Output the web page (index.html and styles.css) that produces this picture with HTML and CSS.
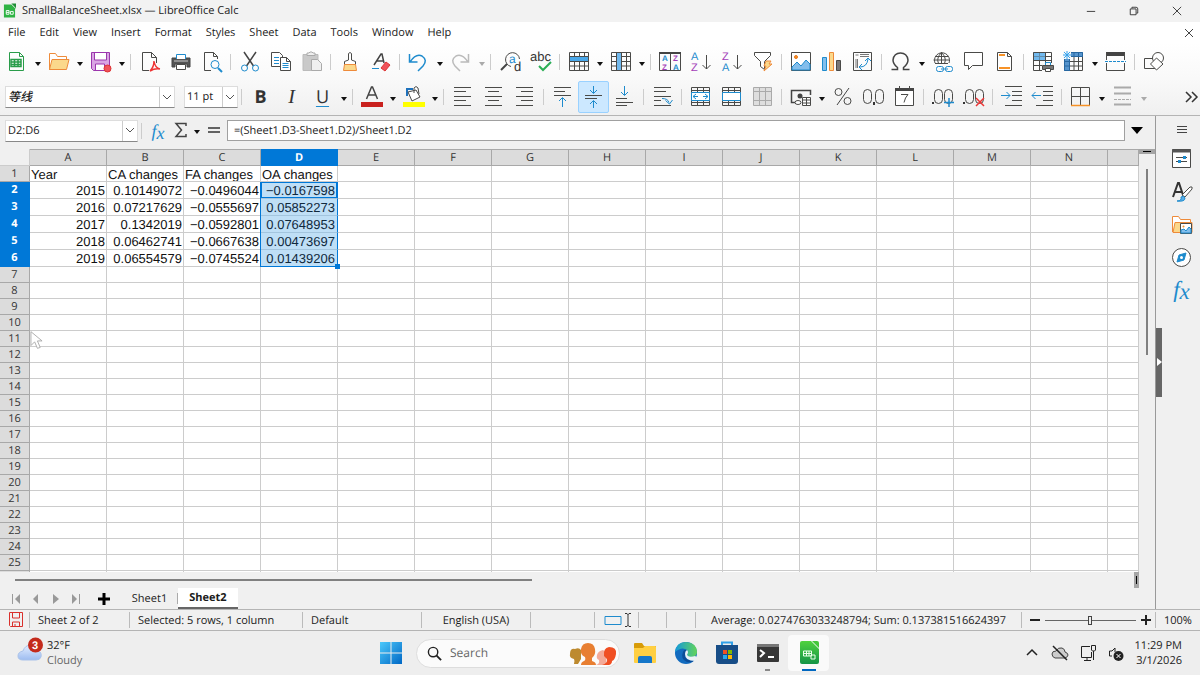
FILE: index.html
```html
<!DOCTYPE html>
<html lang="en">
<head>
<meta charset="utf-8">
<title>SmallBalanceSheet.xlsx — LibreOffice Calc</title>
<link rel="stylesheet" href="styles.css">
</head>
<body>
<header class="titlebar">
  <svg class="app-icon" viewBox="0 0 14 16"><path d="M1 1h8l4 4v10H1z" fill="#2fb344"/><path d="M9 0l5 5V0z" fill="#1e8e35"/><path d="M3.500 7.500h3v4h-3zM8 8.500h3v3H8zM3.500 9.500h3" fill="none" stroke="#fff"/></svg>
  <h1>SmallBalanceSheet.xlsx — LibreOffice Calc</h1>
  <div class="window-buttons">
    <button aria-label="Minimize"><svg viewBox="0 0 12 12"><path d="M1 6.500h10"/></svg></button>
    <button aria-label="Restore"><svg viewBox="0 0 12 12"><path d="M1.500 3.500h7v7h-7zM3.500 3V1.500h5q2 0 2 2v5H9"/></svg></button>
    <button aria-label="Close"><svg viewBox="0 0 12 12"><path d="M1 1l10 10M11 1L1 11"/></svg></button>
  </div>
</header>
<nav class="menubar">
  <button>File</button><button>Edit</button><button>View</button><button>Insert</button><button>Format</button><button>Styles</button><button>Sheet</button><button>Data</button><button>Tools</button><button>Window</button><button>Help</button>
  <button class="doc-close" aria-label="Close document"><svg viewBox="0 0 8 8"><path d="M0 0l8 8M8 0L0 8"/></svg></button>
</nav>

<div class="toolbar">
  <button class="tool" aria-label="New"><svg viewBox="0 0 22 22"><path class="gr" d="M3.500 1.500h10l4 4v14h-14zM13.500 1.500v4h4"/><path class="gr" d="M5 8.500h10v7H5zM5 11h10M5 13.500h10M8.500 8.500v7M12 8.500v7" stroke-width="1.500"/></svg></button><button class="drop" aria-label="New options"></button>
  <button class="tool" aria-label="Open"><svg viewBox="0 0 22 22"><path class="or" fill="#fff" d="M1.500 19V2.500h6l2 3h9V9"/><path class="or" d="M1.500 18.500L4 8.500h17l-2.500 10z" fill="#fbd88b"/></svg></button><button class="drop" aria-label="Recent files"></button>
  <button class="tool" aria-label="Save"><svg viewBox="0 0 22 22"><path class="pu" d="M1.500 1.500h18v18h-16l-2-2z" fill="#d9a5e3"/><path class="pu" d="M4.500 2v7h12V2" fill="#fff"/><path class="pu" d="M5.500 19v-6h9v6" fill="#fff"/><circle cx="17.500" cy="17.500" r="3.500" fill="#f0525a" stroke="#d33"/></svg></button><button class="drop" aria-label="Save options"></button>
  <span class="sep"></span>
  <button class="tool" aria-label="Export as PDF"><svg viewBox="0 0 22 22"><path class="dk" d="M10 19.500H3.500v-18h9l5 5V12M12.500 1.500v5h5"/><path d="M11 20q4-4 4-10 1 7 6 8-5-1-10 2z" stroke="#e33" stroke-width="1.500"/></svg></button>
  <button class="tool" aria-label="Print"><svg viewBox="0 0 22 22"><path d="M2 7h18v9h-3v-3H5v3H2z" fill="#555" stroke="#444"/><path class="bl" d="M6.500 8V3.500h9V8" fill="#fff"/><path class="dk" d="M6.500 13.500h9v5h-9z" fill="#fff"/><path d="M4 10h14" stroke="#ccc"/></svg></button>
  <button class="tool" aria-label="Print preview"><svg viewBox="0 0 22 22"><path class="dk" d="M10 19.500H3.500v-18h9l4 4V8M12.500 1.500v4h4"/><circle class="bl" cx="14" cy="13.500" r="4"/><path class="bl" d="M17 17l4 4" stroke-width="2"/></svg></button>
  <span class="sep"></span>
  <button class="tool" aria-label="Cut"><svg viewBox="0 0 22 22"><path d="M5 1l9.500 14M17 1L7.500 15" stroke="#444" stroke-width="1.500"/><circle class="bl" cx="5.500" cy="17" r="3"/><circle class="bl" cx="16.500" cy="17" r="3"/></svg></button>
  <button class="tool" aria-label="Copy"><svg viewBox="0 0 22 22"><path class="dk" d="M1.500 1.500h8l3 3v11h-11z" fill="#fff"/><path class="bl" d="M4 6.500h5M4 9.500h5M4 12.500h5"/><path class="dk" d="M10.500 6.500h6l4 4v9h-10zM16.500 6.500v4h4" fill="#fff"/><path class="bl" d="M12.500 12.500h6M12.500 14.500h6M12.500 16.500h6"/></svg></button>
  <button class="tool" aria-label="Paste"><svg viewBox="0 0 22 22"><path d="M2 3.500h15v16H2z" fill="#c9c9c9" stroke="#bbb"/><path d="M6 4.500V2h2l1-1h2l1 1h2v2.500z" fill="#eee" stroke="#aaa"/><path d="M10.500 8.500h6l4 4v7h-10z" fill="#f0f0f0" stroke="#aaa"/></svg></button>
  <span class="sep"></span>
  <button class="tool" aria-label="Clone formatting"><svg viewBox="0 0 22 22"><path class="dk" d="M9.500 9V2.500q1.500-2 3 0V9l4 1.500v3h-11v-3z" fill="#fff"/><path class="or" d="M5.500 13.500h11l1 6h-13z" fill="#fbd88b"/></svg></button>
  <button class="tool" aria-label="Clear formatting"><svg viewBox="0 0 22 22"><path d="M4 14L11 3h1l2 9M7 10h6" stroke="#444" stroke-width="1.500"/><path d="M11 17l5-6 4 3-5 6z" fill="#f0525a" stroke="#d33"/><path class="bl" d="M2 17.500h7"/></svg></button>
  <span class="sep"></span>
  <button class="tool" aria-label="Undo"><svg viewBox="0 0 22 22"><path class="bl" d="M1.500 3v8h8M2 11q6-9 12-6 6 4 1 10l-5 5" stroke-width="1.500"/></svg></button><button class="drop" aria-label="Undo list"></button>
  <button class="tool" aria-label="Redo" disabled><svg viewBox="0 0 22 22"><path d="M18.500 3v8h-8M18 11Q12 2 6 5q-6 4-1 10l5 5" stroke="#bbb" stroke-width="1.500"/></svg></button><button class="drop" aria-label="Redo list" disabled></button>
  <span class="sep"></span>
  <button class="tool" aria-label="Find and replace"><svg viewBox="0 0 22 22"><path class="dk" d="M12 15.500A7 7 0 1 1 20.500 8"/><path d="M8 13l-6 6" stroke="#444" stroke-width="2"/><text x="10" y="12" fill="#1e8bcd" font-size="12">a</text><text x="15" y="20" fill="#333" font-size="13">d</text></svg></button>
  <button class="tool" aria-label="Spelling"><svg viewBox="0 0 22 22"><text x="0" y="10" fill="#333" font-size="13">abc</text><path d="M9 15l4 4 8-8" stroke="#2cae55" stroke-width="2"/></svg></button>
  <span class="sep"></span>
  <button class="tool" aria-label="Row"><svg viewBox="0 0 22 22"><path d="M1 6h19v5H1z" fill="#72b9ee"/><path class="dk" d="M1.500 1.500h19v18h-19zM1.500 5.500h19M1.500 10.500h19M1.500 15h19M6.500 1.500v18M11.500 1.500v18M16.500 1.500v18"/><path d="M2 6h18v4H2z" fill="#4aa8ea"/></svg></button><button class="drop" aria-label="Row options"></button>
  <button class="tool" aria-label="Column"><svg viewBox="0 0 22 22"><path class="dk" d="M1.500 1.500h19v18h-19zM1.500 5.500h19M1.500 10.500h19M1.500 15h19M6.500 1.500v18M11.500 1.500v18M16.500 1.500v18"/><path d="M7 2h4v17H7z" fill="#72b9ee"/></svg></button><button class="drop" aria-label="Column options"></button>
  <span class="sep"></span>
  <button class="tool" aria-label="Sort"><svg viewBox="0 0 22 22"><path class="dk" d="M.500 1.500h21v18H.5zM11.500 2v17"/><path d="M0 2h22" stroke="#444" stroke-width="2"/><g font-size="8" font-weight="700"><text x="3" y="10" fill="#1e8bcd">A</text><text x="3" y="19" fill="#a33db8">Z</text><text x="14" y="10" fill="#a33db8">Z</text><text x="14" y="19" fill="#1e8bcd">A</text></g></svg></button>
  <button class="tool" aria-label="Sort ascending"><svg viewBox="0 0 22 22"><g font-size="11"><text x="1" y="9" fill="#1e8bcd">A</text><text x="1" y="20" fill="#a33db8">Z</text></g><path class="dk" d="M16.500 4v14M12.500 14l4 4 4-4"/></svg></button>
  <button class="tool" aria-label="Sort descending"><svg viewBox="0 0 22 22"><g font-size="11"><text x="1" y="9" fill="#a33db8">Z</text><text x="1" y="20" fill="#1e8bcd">A</text></g><path class="dk" d="M16.500 4v14M12.500 14l4 4 4-4"/></svg></button>
  <button class="tool" aria-label="AutoFilter"><svg viewBox="0 0 22 22"><path class="dk" d="M2.500 1.500h16v3l-6 6v8l-4-3v-5l-6-6z" fill="#fff"/><path class="or" d="M14 10h5l-2 3h3l-8 7 2-5h-2z" fill="#fbd88b"/></svg></button>
  <span class="sep"></span>
  <button class="tool" aria-label="Insert image"><svg viewBox="0 0 22 22"><path class="dk" d="M1.500 1.500h19v18h-19z" fill="#fff"/><circle cx="6" cy="6" r="1.500" fill="#f79226" stroke="#e8791c"/><path class="bl" d="M2 19v-3l5-5 4 4 5-6 4 4v6z" fill="#83beec"/></svg></button>
  <button class="tool" aria-label="Insert chart"><svg viewBox="0 0 22 22"><path class="bl" d="M1.500 6.500h4v13h-4z" fill="#83beec"/><path class="or" d="M8.500 1.500h4v18h-4z" fill="#fbd88b"/><path class="dk" d="M15.500 9.500h4v10h-4z" fill="#777"/></svg></button>
  <button class="tool" aria-label="Insert pivot table"><svg viewBox="0 0 22 22"><path class="dk" d="M1.500 1.500h18v18h-18z"/><path d="M3.500 4h3M8 3.500h9M8 5.500h9M4 8v9M5.500 8v9" stroke="#777"/><path class="bl" d="M8 16q7 0 8-8M13 10l3-3 3 3M10 13l-3 3 3 3"/></svg></button>
  <span class="sep"></span>
  <button class="tool" aria-label="Insert special character"><svg viewBox="0 0 22 22"><path d="M1.500 18.500h6v-2Q3 13 3 9q1-7 7.500-7T18 9q0 4-4.500 7.500v2h6" stroke="#444" stroke-width="1.500"/></svg></button><button class="drop" aria-label="Special characters"></button>
  <button class="tool" aria-label="Insert hyperlink"><svg viewBox="0 0 22 22"><path class="dk" d="M17 12a7.500 7.500 0 1 0-14 0M1.500 9h16M9.500 1.500v11M3 5.500h13M3 12.500h13M6.500 12.500Q4 7 9.500 1.500 15 7 12.500 12.500"/><rect class="bl" x="4.500" y="15.500" width="7" height="5" rx="2"/><rect class="bl" x="13.500" y="15.500" width="7" height="5" rx="2"/><path class="bl" d="M9 18h7"/></svg></button>
  <button class="tool" aria-label="Insert comment"><svg viewBox="0 0 22 22"><path class="dk" d="M1.500 1.500h18v13h-10l-4 4v-4h-4z" fill="#fff"/></svg></button>
  <button class="tool" aria-label="Headers and footers"><svg viewBox="0 0 22 22"><path class="dk" d="M3.500 1.500h10l4 4v14h-14zM13.500 1.500v4h4" fill="#fff"/><path d="M5 4h6M5 17h11" stroke="#f79226" stroke-width="2"/></svg></button>
  <span class="sep"></span>
  <button class="tool" aria-label="Print area"><svg viewBox="0 0 22 22"><path d="M1 1h13v8H1z" fill="#72b9ee"/><path class="dk" d="M1.500 1.500h18v18h-18zM1.500 5.500h18M1.500 9.500h18M1.500 14.500h18M7.500 1.500v18M13.500 1.500v18"/><path d="M2 2h11v7H2z" fill="#72b9ee" fill-opacity=".6"/><path d="M10 12h12v9H10z" fill="#f8f8f8"/><path class="dk" d="M10.500 14.500h11v4h-11z" fill="#777"/><path class="bl" d="M13.500 14v-2.500h5V14"/><path class="dk" d="M13.500 17.500h5v3h-5z" fill="#fff"/></svg></button>
  <button class="tool" aria-label="Freeze rows and columns"><svg viewBox="0 0 22 22"><path class="dk" d="M1.500 1.500h18v18h-18zM1.500 5.500h18M1.500 10.500h18M1.500 15h18M6.500 1.500v18M11 1.500v18M15.500 1.500v18"/><path d="M1 1h19v5H7v14H1z" fill="#1e72bd" fill-opacity=".75"/><path d="M0 0h8v8H0z" fill="#f8f8f8"/><path d="M4 0v8M0 4h8M1 1l6 6M7 1L1 7" stroke="#34a2ee"/></svg></button><button class="drop" aria-label="Freeze options"></button>
  <button class="tool" aria-label="Split window"><svg viewBox="0 0 22 22"><path d="M1 3h19" stroke="#444" stroke-width="4"/><path class="dk" d="M1.500 1.500V9M19.500 1.500V9M1.500 12v7.500h18V12"/><path class="bl" d="M0 10.500h21" stroke-dasharray="3 1"/></svg></button>
  <span class="sep"></span>
  <button class="tool" aria-label="Show draw functions"><svg viewBox="0 0 22 22"><path class="dk" d="M1.500 7.500h12v10h-12z"/><circle class="dk" cx="15" cy="7" r="5.500" fill="#fff"/><path class="dk" d="M13.500 7L20 13l-6.500 6L7.500 13z" fill="#fff"/></svg></button>
</div>

<div class="toolbar format">
  <div class="combo font-combo"><input aria-label="Font name" value="等线"><button aria-label="Font list"><svg viewBox="0 0 8 5"><path d="M0 0l4 4 4-4"/></svg></button></div>
  <div class="combo size-combo"><input aria-label="Font size" value="11 pt"><button aria-label="Font size list"><svg viewBox="0 0 8 5"><path d="M0 0l4 4 4-4"/></svg></button></div>
  <span class="sep"></span>
  <button class="tool letter bold" aria-label="Bold">B</button>
  <button class="tool letter italic" aria-label="Italic">I</button>
  <button class="tool letter underline" aria-label="Underline">U</button><button class="drop" aria-label="Underline styles"></button>
  <span class="sep"></span>
  <button class="tool" aria-label="Font color"><svg viewBox="0 0 22 22"><path d="M5.500 13L10.500 1h1l5 12M7.500 9h7" stroke="#444" stroke-width="1.500"/><path d="M0 16h22v5H0z" fill="#c9211e"/></svg></button><button class="drop" aria-label="Font colors"></button>
  <button class="tool" aria-label="Background color"><svg viewBox="0 0 22 22"><path d="M4 10V3h6" stroke="#1e72bd" stroke-width="2"/><path class="dk" d="M5 6l8-2 4 7-8 4zM11 7V2q2-3 4 0l1 6" fill="#fff"/><path d="M0 16h22v5H0z" fill="#ff0"/></svg></button><button class="drop" aria-label="Background colors"></button>
  <span class="sep"></span>
  <button class="tool" aria-label="Align left"><svg viewBox="0 0 22 22"><path class="dk" d="M2 1.500h17M2 5.500h12M2 10.500h17M2 14.500h12M2 19.500h17"/></svg></button>
  <button class="tool" aria-label="Center horizontally"><svg viewBox="0 0 22 22"><path class="dk" d="M2 1.500h17M5 5.500h11M2 10.500h17M5 14.500h11M2 19.500h17"/></svg></button>
  <button class="tool" aria-label="Align right"><svg viewBox="0 0 22 22"><path class="dk" d="M2 1.500h17M7 5.500h12M2 10.500h17M7 14.500h12M2 19.500h17"/></svg></button>
  <span class="sep"></span>
  <button class="tool" aria-label="Align top"><svg viewBox="0 0 22 22"><path class="dk" d="M2 1.500h17M2 5.500h11M2 9.500h17"/><path class="bl" d="M10.500 21v-9M7 15l3.500-3.500L14 15"/></svg></button>
  <button class="tool on" aria-label="Center vertically" aria-pressed="true"><svg viewBox="0 0 22 22"><path class="dk" d="M2 9.500h17M2 12.500h12"/><path class="bl" d="M10.500 0v7M7 4l3.500 3.500L14 4M10.500 22v-7M7 18l3.500-3.500L14 18"/></svg></button>
  <button class="tool" aria-label="Align bottom"><svg viewBox="0 0 22 22"><path class="dk" d="M2 12.500h11M2 16.500h17M2 19.500h11"/><path class="bl" d="M10.500 0v9M7 6l3.500 3.500L14 6"/></svg></button>
  <span class="sep"></span>
  <button class="tool" aria-label="Wrap text"><svg viewBox="0 0 22 22"><path class="dk" d="M2 1.500h17M2 5.500h12M2 10.500h17M2 14.500h7M2 19.500h17"/><path class="bl" d="M10 12.500q6 0 7 4M13.500 14.500l4 3.500 3-4"/></svg></button>
  <span class="sep"></span>
  <button class="tool" aria-label="Merge and center cells"><svg viewBox="0 0 22 22"><path class="dk" d="M1.500 1.500h18v18h-18zM1.500 4.500h18M1.500 16.500h18M7.500 1.500v5M13.500 1.500v5M7.500 14v5M13.500 14v5"/><path class="bl" d="M1.500 6.500h18v8h-18z" fill="#fff"/><path class="bl" d="M3 10.500h5M13 10.500h5M6 8l-3 2.500L6 13M15 8l3 2.500-3 2.500"/></svg></button>
  <button class="tool" aria-label="Merge cells"><svg viewBox="0 0 22 22"><path class="dk" d="M1.500 1.500h18v18h-18zM1.500 4.500h18M1.500 16.500h18M7.500 1.500v5M13.500 1.500v5M7.500 14v5M13.500 14v5"/><path class="bl" d="M1.500 6.500h18v8h-18z" fill="#fff"/></svg></button>
  <button class="tool" aria-label="Unmerge cells" disabled><svg viewBox="0 0 22 22"><path d="M1.500 1.500h18v18h-18zM1.500 5.500h18M1.500 14.500h18M7.500 1.500v18M13.500 1.500v18" fill="#dedede" stroke="#aaa"/></svg></button>
  <span class="sep"></span>
  <button class="tool" aria-label="Format as currency"><svg viewBox="0 0 22 22"><path d="M9 16.500H1.500v-12h19V9" stroke="#444" stroke-width="1.500"/><circle cx="10" cy="10" r="2.500" fill="#444"/><ellipse class="dk" cx="8" cy="16.500" rx="3" ry="2" fill="#fff"/><path class="dk" d="M12.500 11.500h8v8h-8zM12.500 14h8M12.500 17h8M16.500 12v8" fill="#fff"/></svg></button><button class="drop" aria-label="Currencies"></button>
  <button class="tool" aria-label="Format as percent"><svg viewBox="0 0 22 22"><path d="M17 2L5 19" stroke="#444"/><circle class="dk" cx="6.500" cy="6" r="3.500"/><circle class="dk" cx="15.500" cy="15" r="3.500"/></svg></button>
  <button class="tool" aria-label="Format as number"><svg viewBox="0 0 22 22"><rect class="dk" x=".5" y="3.500" width="8" height="14" rx="4"/><rect class="dk" x="12.500" y="3.500" width="8" height="14" rx="4"/><path d="M10 16h2v3h-2z" fill="#333"/></svg></button>
  <button class="tool" aria-label="Format as date"><svg viewBox="0 0 22 22"><path class="dk" d="M1.500 4.500h18v15h-18z" fill="#fff"/><path d="M1 3.500h19" stroke="#444" stroke-width="3"/><path class="dk" d="M5.500 0v4M15.500 0v4M7 8.500h7q-3 3-4 8"/></svg></button>
  <span class="sep"></span>
  <button class="tool" aria-label="Add decimal place"><svg viewBox="0 0 22 22"><path d="M0 16h2v2H0z" fill="#333"/><rect class="dk" x="2.500" y="3.500" width="8" height="14" rx="4"/><rect class="dk" x="12.500" y="3.500" width="8" height="14" rx="4"/><path class="bl" d="M17 12v9M12 16.500h10" stroke-width="1.500"/></svg></button>
  <button class="tool" aria-label="Delete decimal place"><svg viewBox="0 0 22 22"><path d="M0 16h2v2H0z" fill="#333"/><rect class="dk" x="2.500" y="3.500" width="8" height="14" rx="4"/><rect class="dk" x="12.500" y="3.500" width="8" height="14" rx="4"/><path d="M13 12l8 8M21 12l-8 8" stroke="#e33" stroke-width="1.500"/></svg></button>
  <span class="sep"></span>
  <button class="tool" aria-label="Increase indent"><svg viewBox="0 0 22 22"><path class="dk" d="M4 .500h17M11 5.500h10M11 9.500h10M11 14.500h10M4 19.500h17"/><path class="bl" d="M0 9.500h9M5.500 6L9 9.500 5.500 13"/></svg></button>
  <button class="tool" aria-label="Decrease indent"><svg viewBox="0 0 22 22"><path class="dk" d="M4 .500h17M11 5.500h10M11 9.500h10M11 14.500h10M4 19.500h17"/><path class="bl" d="M0 9.500h9M3.500 6L0 9.500 3.500 13"/></svg></button>
  <span class="sep"></span>
  <button class="tool" aria-label="Borders"><svg viewBox="0 0 22 22"><path class="dk" d="M1.500 19V1.500h18V19M10.500 1.500V19M1.500 10.500h18"/><path d="M1 19.500h19" stroke="#f79226" stroke-width="1.500"/></svg></button><button class="drop" aria-label="Border choices"></button>
  <button class="tool" aria-label="Border style" disabled><svg viewBox="0 0 22 22"><path d="M2 1.500h17M2 7.500h17M2 18.500h17" stroke="#aaa" stroke-width="2"/><path d="M2 13.500h17" stroke="#aaa" stroke-dasharray="3 1"/></svg></button><button class="drop" aria-label="Border styles" disabled></button>
  <button class="tool more" aria-label="More"><svg viewBox="0 0 22 22"><path d="M5 6l5 5-5 5M11 6l5 5-5 5" stroke="#333" stroke-width="1.500"/></svg></button>
</div>

<main class="workspace">
  <section class="document">
    <div class="formula-bar">
      <div class="combo name-combo"><input aria-label="Name box" value="D2:D6"><button aria-label="Named ranges"><svg viewBox="0 0 8 5"><path d="M0 0l4 4 4-4"/></svg></button></div>
      <span class="sep"></span>
      <button class="fx" aria-label="Function wizard"><i>f</i><i>x</i></button>
      <button class="sigma" aria-label="Select function"><svg viewBox="0 0 14 18"><path d="M12 4V1.500H2l5.500 6.500L2 14.500h10V12" stroke="#444" stroke-width="1.500"/></svg></button>
      <button class="drop" aria-label="Functions"></button>
      <button class="equals" aria-label="Formula"><svg viewBox="0 0 12 10"><path d="M0 2h12M0 6h12" stroke="#333" stroke-width="1.500"/></svg></button>
      <input class="formula" aria-label="Input line" value="=(Sheet1.D3-Sheet1.D2)/Sheet1.D2">
      <button class="expand" aria-label="Expand formula bar"></button>
    </div>
    <div class="grid-area">
      <div class="grid-clip">
        <table class="cells">
          <thead><tr><td class="corner"></td><th>A</th><th>B</th><th>C</th><th class="active">D</th><th>E</th><th>F</th><th>G</th><th>H</th><th>I</th><th>J</th><th>K</th><th>L</th><th>M</th><th>N</th><th class="rest"></th></tr></thead>
          <tbody>
          <tr><th>1<td>Year<td>CA changes<td>FA changes<td><span class="misspelled">OA</span> changes<td><td><td><td><td><td><td><td><td><td><td>
          <tr class="num"><th class="active">2<td>2015<td>0.10149072<td>−0.0496044<td class="sel first">−0.0167598<td><td><td><td><td><td><td><td><td><td><td>
          <tr class="num"><th class="active">3<td>2016<td>0.07217629<td>−0.0555697<td class="sel">0.05852273<td><td><td><td><td><td><td><td><td><td><td>
          <tr class="num"><th class="active">4<td>2017<td>0.1342019<td>−0.0592801<td class="sel">0.07648953<td><td><td><td><td><td><td><td><td><td><td>
          <tr class="num"><th class="active">5<td>2018<td>0.06462741<td>−0.0667638<td class="sel">0.00473697<td><td><td><td><td><td><td><td><td><td><td>
          <tr class="num"><th class="active">6<td>2019<td>0.06554579<td>−0.0745524<td class="sel last">0.01439206<td><td><td><td><td><td><td><td><td><td><td>
          <tr><th>7<td><td><td><td><td><td><td><td><td><td><td><td><td><td><td>
          <tr><th>8<td><td><td><td><td><td><td><td><td><td><td><td><td><td><td>
          <tr><th>9<td><td><td><td><td><td><td><td><td><td><td><td><td><td><td>
          <tr><th>10<td><td><td><td><td><td><td><td><td><td><td><td><td><td><td>
          <tr><th>11<td><td><td><td><td><td><td><td><td><td><td><td><td><td><td>
          <tr><th>12<td><td><td><td><td><td><td><td><td><td><td><td><td><td><td>
          <tr><th>13<td><td><td><td><td><td><td><td><td><td><td><td><td><td><td>
          <tr><th>14<td><td><td><td><td><td><td><td><td><td><td><td><td><td><td>
          <tr><th>15<td><td><td><td><td><td><td><td><td><td><td><td><td><td><td>
          <tr><th>16<td><td><td><td><td><td><td><td><td><td><td><td><td><td><td>
          <tr><th>17<td><td><td><td><td><td><td><td><td><td><td><td><td><td><td>
          <tr><th>18<td><td><td><td><td><td><td><td><td><td><td><td><td><td><td>
          <tr><th>19<td><td><td><td><td><td><td><td><td><td><td><td><td><td><td>
          <tr><th>20<td><td><td><td><td><td><td><td><td><td><td><td><td><td><td>
          <tr><th>21<td><td><td><td><td><td><td><td><td><td><td><td><td><td><td>
          <tr><th>22<td><td><td><td><td><td><td><td><td><td><td><td><td><td><td>
          <tr><th>23<td><td><td><td><td><td><td><td><td><td><td><td><td><td><td>
          <tr><th>24<td><td><td><td><td><td><td><td><td><td><td><td><td><td><td>
          <tr><th>25<td><td><td><td><td><td><td><td><td><td><td><td><td><td><td>
          <tr><th><td><td><td><td><td><td><td><td><td><td><td><td><td><td><td>
          </tbody>
        </table>
      </div>
      <div class="vscroll"><span class="split-h"></span><span class="vthumb"></span></div>
    </div>
    <div class="hscroll"><span class="hthumb"></span><span class="split-v"></span></div>
    <div class="tabs">
      <button class="nav" aria-label="First sheet"><svg viewBox="0 0 8 12"><path d="M.500 1v10"/><path d="M8 1v10L3 6z" fill="#999" stroke="none"/></svg></button>
      <button class="nav" aria-label="Previous sheet"><svg viewBox="0 0 8 12"><path d="M6 1v10L1 6z" fill="#999" stroke="none"/></svg></button>
      <button class="nav" aria-label="Next sheet"><svg viewBox="0 0 8 12"><path d="M1 1v10l6-5z" fill="#999" stroke="none"/></svg></button>
      <button class="nav" aria-label="Last sheet"><svg viewBox="0 0 8 12"><path d="M7.500 1v10"/><path d="M0 1v10l5-5z" fill="#999" stroke="none"/></svg></button>
      <button class="add" aria-label="Add sheet"><svg viewBox="0 0 12 12"><path d="M6 0v12M0 6h12" stroke="#000" stroke-width="3"/></svg></button>
      <button class="tab">Sheet1</button>
      <button class="tab current">Sheet2</button>
    </div>
  </section>
  <aside class="sidebar">
    <button class="side-menu" aria-label="Sidebar settings"><svg viewBox="0 0 10 8"><path d="M0 .500h10M0 3.500h10M0 6.500h10" stroke="#444"/></svg></button>
    <button aria-label="Properties"><svg viewBox="0 0 22 22"><path class="dk" d="M1.500 1.500h18v18h-18z" fill="#fff"/><path d="M1 3h19" stroke="#555" stroke-width="3"/><path class="dk" d="M5 9.500h11M5 13.500h11"/><path d="M12 8h3v3h-3zM7 12h3v3H7z" fill="#1e8bcd"/></svg></button>
    <button aria-label="Styles"><svg viewBox="0 0 22 22"><path d="M2 16L7 2h1l4 12M4 11h7" stroke="#333" stroke-width="2"/><path class="dk" d="M11 14l8-8q3-1 2 2l-7 8z" fill="#fff"/><path class="bl" d="M6 20q5 0 4-4 3-2 4 1 0 4-8 3z" fill="#5aaee8"/></svg></button>
    <button aria-label="Gallery"><svg viewBox="0 0 22 22"><path class="or" d="M1.500 18V2.500h6l2 3h10V8" fill="#fff"/><path class="or" d="M2 18.500L4 8.500h17v10z" fill="#fbd88b"/><path class="dk" d="M9.500 9.500h11v10h-11z" fill="#fff"/><circle cx="12.500" cy="12.500" r="1" fill="#f79226"/><path class="bl" d="M10 19v-3l3-1 2 2 3-4 2 2v4z" fill="#83beec"/></svg></button>
    <button aria-label="Navigator"><svg viewBox="0 0 22 22"><circle class="dk" cx="10.500" cy="10.500" r="9" fill="#fff"/><path class="bl" d="M15 6l-2 7-7 2 2-7z" fill="#1e8bcd"/><circle cx="10.500" cy="10.500" r="1.500" fill="#fff"/></svg></button>
    <button class="fx" aria-label="Functions"><i>f</i><i>x</i></button>
    <button class="handle" aria-label="Hide sidebar"></button>
  </aside>
</main>

<footer class="statusbar">
  <div class="icon-field"><svg viewBox="0 0 16 16"><path d="M1.500 .500h13v14h-12l-1-1zM4.500 1v5h7V1M4.500 14v-4h7v4M7 12v2" stroke="#d9302c"/></svg></div>
  <div>Sheet 2 of 2</div>
  <div>Selected: 5 rows, 1 column</div>
  <div>Default</div>
  <div class="mid">English (USA)</div>
  <div></div>
  <div class="mode"><svg viewBox="0 0 30 16"><path d="M2 4.500h16v8H2z" stroke="#1e8bcd"/><path d="M22 1.500h2l1 1 1-1h2M25 2v12M22 14.500h2l1-1 1 1h2" stroke="#333"/></svg></div>
  <div></div>
  <div></div>
  <div class="mid">Average: 0.0274763033248794; Sum: 0.137381516624397</div>
  <div class="zoom"><button aria-label="Zoom out"><svg viewBox="0 0 10 10"><path d="M0 5h10" stroke="#222" stroke-width="2"/></svg></button><input type="range" aria-label="Zoom" min="0" max="100" value="49"><button aria-label="Zoom in"><svg viewBox="0 0 10 10"><path d="M0 5h10M5 0v10" stroke="#222" stroke-width="2"/></svg></button></div>
  <div>100%</div>
</footer>

<div class="taskbar">
  <button class="weather">
    <svg class="cloud" viewBox="0 0 28 26"><defs><linearGradient id="cl" x2="0" y2="1"><stop stop-color="#e4eeff"/><stop offset="1" stop-color="#9dbcf0"/></linearGradient></defs><path d="M6 23q-5 0-5-4t5-5q2-6 8-6 6 1 7 6 4 1 3 6-1 3-5 3z" fill="url(#cl)" stroke="#a9c2ea"/><circle cx="18.500" cy="8" r="7.500" fill="#c42b1c"/><text x="15" y="12" fill="#fff" font-size="11" font-weight="700">3</text></svg>
    <span class="weather-text"><span>32°F</span><span class="dim">Cloudy</span></span>
  </button>
  <div class="apps">
    <button class="start" aria-label="Start"><svg viewBox="0 0 22 22"><defs><linearGradient id="wn" x2="1" y2="1"><stop stop-color="#4cc9fb"/><stop offset="1" stop-color="#0067c5"/></linearGradient></defs><path d="M0 0h10.500v10.500H0zM11.500 0H22v10.500H11.500zM0 11.500h10.500V22H0zM11.500 11.500H22V22H11.500z" fill="url(#wn)"/></svg></button>
    <label class="search"><svg class="glass" viewBox="0 0 16 16"><circle cx="6.500" cy="6.500" r="5" stroke="#222" stroke-width="1.500"/><path d="M10 10l5 5" stroke="#222" stroke-width="2"/></svg><input placeholder="Search" aria-label="Search"><svg class="people" viewBox="0 0 48 24"><path d="M5 23q1-3 0-5-5-1-4-5 0-6 5-5 4-2 6 1v9l-3 5z" fill="#bd8a2f"/><path d="M27 24q4-1 3-5-3-1-2-5 1-4 6-5l4 3-1 12z" fill="#f3aa98"/><path d="M12 24q0-3 3-4 2-1 1-4-5-2-4-8 1-6 7-6t7 6q1 6-3 9v3q4 1 4 4z" fill="#e87f32"/><path d="M33 24q6-2 5-6l-3-3q-1-8 5-9 8 0 7 7-1 6-4 7 0 3-3 4z" fill="#f04f23"/></svg></label>
    <button class="app" aria-label="File Explorer"><svg viewBox="0 0 24 24"><path d="M1 3q0-1 1-1h7l2 3h12v6H1z" fill="#d79b08"/><path d="M1 7h9l2-2h10q1 0 1 1v15q0 1-1 1H2q-1 0-1-1z" fill="#ffcf42"/><path d="M5 22v-5q0-2 2-2h10q2 0 2 2v5z" fill="#1677c9"/></svg></button>
    <button class="app" aria-label="Edge"><svg viewBox="0 0 24 24"><defs><linearGradient id="eg"><stop stop-color="#1599db"/><stop offset="1" stop-color="#62d45a"/></linearGradient></defs><circle cx="12" cy="12" r="11" fill="#126bbf"/><path d="M1 11Q2 1 12 1q11 1 11 10 0 5-6 5-3 0-4-2 2-3 0-5-5-4-12 2z" fill="url(#eg)"/><path d="M9 11q-3 7 4 10 5 1 8-2-10 2-10-6 0-2 2-4-3-1-4 2z" fill="#0b4d99"/><path d="M11 13q0-3 2-4 2 2 0 5 2 3 8 1l2 1-2 4q-10 0-10-7z" fill="#e9f1f5"/></svg></button>
    <button class="app" aria-label="Store"><svg viewBox="0 0 24 24"><path d="M7 6V1.500h10V6" stroke="#2e9fe8" stroke-width="2"/><path d="M1 4h22v16q0 3-3 3H4q-3 0-3-3z" fill="#174d87"/><path d="M8 9h4v4H8z" fill="#f25022"/><path d="M13 9h4v4h-4z" fill="#7fba00"/><path d="M8 14h4v4H8z" fill="#29a9ed"/><path d="M13 14h4v4h-4z" fill="#ffb900"/></svg></button>
    <button class="app running" aria-label="Terminal"><svg viewBox="0 0 24 24"><rect x="1" y="3" width="22" height="18" rx="1" fill="#373737"/><path d="M1 3h22v3H1z" fill="#777"/><path d="M4 9l4 3-4 4M12 16h6" stroke="#fff" stroke-width="2"/></svg></button>
    <button class="app focused" aria-label="LibreOffice Calc"><svg viewBox="0 0 24 24"><defs><linearGradient id="lo" x2="0" y2="1"><stop stop-color="#4fd23e"/><stop offset="1" stop-color="#159447"/></linearGradient></defs><path d="M5 0h9l8 8v13q0 2-2 2H5q-2 0-2-2V2q0-2 2-2z" fill="url(#lo)"/><path d="M15 0h5q2 0 2 2v5z" fill="#43c73a"/><path d="M6.500 10h8v5h-8zM6.500 12.500h8M9.500 10v5M12 10v5M14 14h4v4h-4z" stroke="#e8ffe8"/></svg></button>
  </div>
  <div class="tray">
    <svg viewBox="0 0 18 18"><path d="M4 11l5-5 5 5" stroke="#222" stroke-width="1.500"/></svg>
    <svg viewBox="0 0 18 18"><path d="M4 14q-3-1-3-4t4-3q2-4 6-3 3 1 3 4 3 1 3 3t-3 3z" fill="#ccc" stroke="#444"/><path d="M2 2l14 14" stroke="#222" stroke-width="1.500"/></svg>
    <svg viewBox="0 0 18 18"><path d="M11 2.500H2.500v11h10V8M5 16.500h7M8 14v2M12.500 1.500h4V6l-1 1h-2l-1-1zM14.500 7v9" stroke="#222"/></svg>
    <svg viewBox="0 0 18 18"><path d="M8 4L5 7H2.500v5H5M8 4v4" stroke="#222"/><circle cx="11.500" cy="12" r="5" fill="#222"/><path d="M9.500 10l4 4M13.500 10l-4 4" stroke="#fff"/></svg>
    <div class="clock"><span>11:29 PM</span><span>3/1/2026</span></div>
  </div>
</div>
<svg class="pointer" viewBox="0 0 14 20"><path d="M1 1v15l4-4 3 7 3-1-3-7h5z" fill="#fff" stroke="#aaa"/></svg>
</body>
</html>
```

FILE: styles.css
```css
* { box-sizing: border-box; }

body {
  margin: 0;
  height: 100vh;
  display: flex;
  flex-direction: column;
  overflow: hidden;
  background: #f0f0f0;
  color: #1b1b1b;
  font: 11px/16px "Open Sans", "Noto Sans CJK SC", sans-serif;
  text-rendering: geometricPrecision;
}

button, input {
  margin: 0;
  padding: 0;
  border: 0;
  background: none;
  color: inherit;
  font: inherit;
  text-rendering: inherit;
}

svg { display: block; fill: none; stroke-width: 1; overflow: visible; }
svg text { font-family: "Liberation Sans", sans-serif; }
.dk { stroke: #4a4a48; }
.bl { stroke: #1e8bcd; }
.or { stroke: #ee8b3a; }
.pu { stroke: #9b36ad; }
.gr { stroke: #299c4a; }

/* Title and menus */
.titlebar { flex: none; height: 22px; display: flex; align-items: center; background: #f2f2f2; padding-left: 3px; }
.app-icon { width: 13px; height: 16px; }
.titlebar h1 { margin: 0 0 0 6px; font-size: 11px; font-weight: 400; flex: 1; }
.window-buttons { display: flex; padding-right: 2px; }
.window-buttons button { width: 43px; display: flex; justify-content: center; }
.window-buttons svg { width: 10px; height: 10px; stroke: #222; }

.menubar { flex: none; height: 21px; display: flex; align-items: center; background: #fff; padding-left: 1px; }
.menubar button { padding: 0 7px; }
.menubar .doc-close { margin-left: auto; }
.doc-close svg { width: 8px; height: 8px; stroke: #444; }

/* Toolbars */
.toolbar { flex: none; height: 36px; display: flex; align-items: center; background: linear-gradient(#fff, #f9f9f9); padding: 2px 0 0 1px; }
.toolbar.format { height: 37px; background: linear-gradient(#f9f9f9, #f0f0f0); border-bottom: 1px solid #b4b4b4; padding: 0 0 0 5px; }
.tool { flex: none; width: 31px; height: 32px; display: grid; place-items: center; border: 1px solid transparent; border-radius: 2px; }
.tool svg { width: 22px; height: 22px; }
.tool.on { background: #cce8ff; border-color: #99d1ff; }
.tool.more { margin-left: auto; width: 20px; }
.drop { flex: none; width: 11px; height: 32px; display: grid; place-items: center; }
.drop::before { content: ""; margin-top: 3px; border: 3px solid transparent; border-top: 4px solid #111; border-bottom: 0; }
.drop:disabled::before { border-top-color: #aaa; }
.sep { flex: none; width: 7px; height: 16px; background: linear-gradient(#ccc, #ccc) center / 1px 100% no-repeat; }
.letter { font-size: 18px; line-height: 20px; color: #333; }
.bold { font-weight: 700; }
.italic { font-family: "Liberation Serif", serif; font-style: italic; font-size: 20px; }
.underline { text-decoration: underline #1e8bcd 1px; text-underline-offset: 3px; }

.combo { flex: none; height: 22px; display: flex; background: #fff; border: 1px solid #ddd; border-bottom-color: #888; }
.combo input { flex: 1; min-width: 0; padding-left: 2px; }
.combo button { width: 15px; display: grid; place-items: center; border: 1px solid #ccc; border-width: 0 0 0 1px; }
.combo svg { width: 8px; height: 5px; stroke: #555; }
.font-combo { width: 170px; margin-right: 9px; }
.font-combo input { font-family: "Noto Sans CJK SC", sans-serif; font-style: italic; font-weight: 500; font-size: 12px; }
.size-combo { width: 54px; }
.name-combo { width: 133px; }

/* Work area */
.workspace { flex: 1; min-height: 0; display: flex; border-bottom: 1px solid #b4b4b4; }
.document { flex: 1; min-width: 0; display: flex; flex-direction: column; }
.formula-bar { flex: none; height: 33px; display: flex; align-items: center; padding: 0 8px 4px 5px; }
.fx { font: italic 18px/20px "Liberation Serif", serif; color: #1e8bcd; display: flex; align-items: center; justify-content: center; width: 26px; }
.fx i:last-child { padding-top: 4px; }
.sigma { width: 20px; display: grid; place-items: center; }
.sigma svg { width: 14px; height: 18px; }
.equals { width: 24px; display: grid; place-items: center; }
.equals svg { width: 12px; height: 10px; }
.formula { flex: 1; min-width: 0; height: 21px; padding-left: 6px; margin-left: 1px; background: #fff; border: 1px solid #a0a0a0; }
.expand { width: 20px; margin-left: 2px; display: grid; place-items: center; }
.expand::before { content: ""; border: 6px solid transparent; border-top: 7px solid #000; border-bottom: 0; }

.grid-area { flex: 1; min-height: 0; display: flex; }
.grid-clip { flex: 1; min-width: 0; overflow: hidden; background: #fff; }
.cells { table-layout: fixed; width: 100%; border-collapse: separate; border-spacing: 0; }
.cells th, .cells td { height: 16px; padding: 0; white-space: nowrap; overflow: hidden; border: solid #ccc; border-width: 0 1px 1px 0; }
.cells th { font-weight: 400; line-height: 14px; text-align: center; background: #dcdcdc; color: #333; border-color: #a8a8a8; }
.cells thead th { width: 77px; height: 17px; border-top: 1px solid #a8a8a8; }
.cells thead th.rest { width: auto; }
.cells thead .corner { width: 30px; background: #f0f0f0; }
.cells tbody td { font: 13px/13px "Liberation Sans", sans-serif; color: #111; padding: 2px 1px 0; }
.cells tbody .num td { height: 17px; text-align: right; line-height: 14px; }
.cells th.active { background: #0078d7; color: #fff; font-weight: 700; border-color: #0078d7; }
.cells tbody td.sel { position: relative; overflow: visible; background: #bfdff6; border-right-color: #0078d7; border-bottom-color: #a3c5de; box-shadow: -1px 0 #0078d7; padding-right: 2px; color: #10293d; }
.cells tbody td.sel.first { box-shadow: inset 0 0 0 1px #0078d7, -1px 0 #0078d7; }
.cells tbody td.sel.last { border-bottom-color: #0078d7; }
.sel.last::after { content: ""; position: absolute; right: -3px; bottom: -3px; width: 5px; height: 5px; background: #0078d7; }
.misspelled { text-decoration: underline wavy #e04040 1px; }

.vscroll { flex: none; width: 16px; display: flex; flex-direction: column; align-items: center; }
.split-h { align-self: stretch; height: 5px; background: linear-gradient(#000, #000) center / 8px 1px no-repeat #a5a5a5; }
.vthumb { width: 2px; height: 44%; margin-top: 15px; background: #808080; }
.hscroll { flex: none; height: 16px; display: flex; align-items: center; padding: 0 16px 0 15px; }
.hthumb { width: 46%; height: 2px; background: #808080; }
.split-v { margin-left: auto; width: 5px; height: 16px; background: linear-gradient(#000, #000) center / 1px 8px no-repeat #a5a5a5; }

.tabs { flex: none; height: 21px; display: flex; align-items: stretch; padding-left: 6px; }
.tabs button { display: grid; place-items: center; }
.nav { width: 20px; }
.nav svg { width: 8px; height: 12px; stroke: #999; }
.add { width: 35px; }
.add svg { width: 12px; height: 12px; }
.tab { width: 57px; background: linear-gradient(#aaa, #aaa) right center / 1px 11px no-repeat; }
.tab.current { width: 60px; background: #fff; font-weight: 700; border-bottom: 2px solid #666; }

.sidebar { position: relative; flex: none; width: 45px; border-left: 1px solid #999; display: flex; flex-direction: column; align-items: center; gap: 11px; padding: 10px 0 0 7px; }
.sidebar svg { width: 22px; height: 22px; }
.sidebar .side-menu { height: 8px; margin-bottom: 3px; }
.sidebar .side-menu svg { width: 10px; height: 8px; }
.sidebar .fx { font-size: 23px; line-height: 16px; height: 20px; }
.sidebar .handle { position: absolute; left: 0; top: 43%; width: 6px; height: 69px; background: #666; display: grid; place-items: center; }
.handle::before { content: ""; border: 4px solid transparent; border-left: 5px solid #fff; border-right: 0; }

/* Status bar */
.statusbar { flex: none; height: 21px; display: grid; grid-template-columns: 30px 100px 173px 119px 109px 64px 44px 28px 29px 1fr 134px 44px; align-items: center; border-bottom: 1px solid #b4b4b4; }
.statusbar > div { height: 16px; line-height: 18px; padding-left: 8px; border-right: 1px solid #bbb; white-space: nowrap; }
.statusbar > div:last-child { border: 0; }
.statusbar .mid { padding: 0; text-align: center; }
.statusbar .icon-field svg { width: 16px; height: 16px; }
.mode svg { width: 30px; height: 16px; }
.zoom { display: flex; align-items: center; gap: 5px; }
.zoom svg { width: 10px; height: 10px; }
.zoom input { appearance: none; flex: 1; min-width: 0; height: 12px; background: linear-gradient(#666, #666) center / 100% 1px no-repeat; }
.zoom input::-webkit-slider-thumb { appearance: none; width: 4px; height: 9px; background: #eee; border: 1px solid #444; }
.zoom > :last-child { margin-right: 4px; }

/* Taskbar */
.taskbar { flex: none; height: 44px; display: grid; grid-template-columns: 1fr auto 1fr; align-items: center; padding: 0 8px 0 17px; background: #eee; }
.weather { justify-self: start; display: flex; align-items: center; gap: 2px; text-align: left; }
.cloud { width: 28px; height: 26px; margin-bottom: 6px; }
.weather-text, .clock { display: flex; flex-direction: column; line-height: 15px; }
.dim { color: #666; }
.apps { display: flex; align-items: center; }
.start { width: 24px; margin-right: 12px; }
.start svg { width: 22px; height: 22px; }
.search { width: 204px; height: 29px; margin-right: 4px; display: flex; align-items: center; gap: 8px; padding: 0 2px 0 10px; background: #fbfbfb; border: 1px solid #ddd; border-radius: 15px; }
.search input { flex: 1; min-width: 0; font-size: 12px; }
.search input::placeholder { color: #666; opacity: 1; }
.glass { width: 15px; height: 15px; }
.people { width: 48px; height: 24px; }
.app { width: 41px; height: 36px; display: grid; place-items: center; border-radius: 4px; }
.app svg { width: 24px; height: 24px; }
.focused { background: linear-gradient(#0067c0, #0067c0) center bottom / 14px 2px no-repeat #fafafa; }
.running { background: linear-gradient(#888, #888) center bottom / 5px 2px no-repeat; }
.tray { justify-self: end; display: flex; align-items: center; gap: 10px; }
.tray svg { width: 18px; height: 18px; }
.clock { text-align: right; margin-right: 10px; }

.pointer { position: absolute; left: 30px; top: 330px; width: 13px; height: 20px; }
```
